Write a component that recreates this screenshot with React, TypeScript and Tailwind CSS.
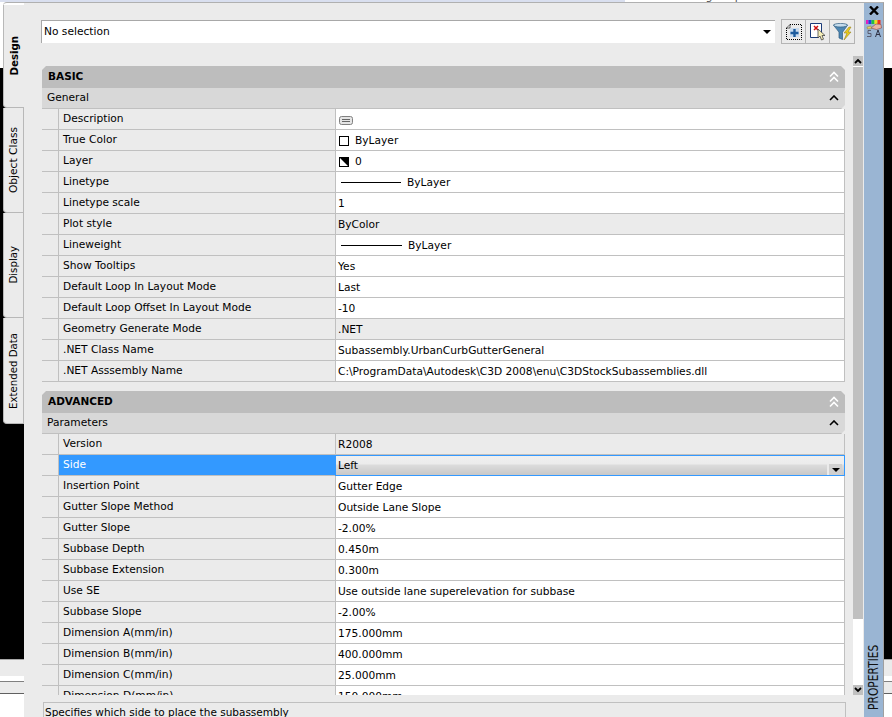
import React from "react";

const font = { fontFamily: '"DejaVu Sans", Tahoma, sans-serif' };

type Row = { l: string; v: React.ReactNode; grey?: boolean; sel?: boolean };

const Line = ({ w = 60 }: { w?: number }) => <span className="inline-block h-px bg-black mr-[6px]" style={{ width: w }} />;

const basic: Row[] = [
  { l: "Description", v: (
    <svg width="14" height="9" viewBox="0 0 14 9" className="block ml-[1px]">
      <rect x="0.5" y="0.5" width="13" height="8" rx="2" fill="#e4e4e4" stroke="#808080" />
      <path d="M3 3.5h8M3 5.5h8" stroke="#666" />
    </svg>
  ) },
  { l: "True Color", v: <span className="flex items-center"><span className="w-[10px] h-[10px] border border-black bg-white ml-[1px] mr-[6px]" />ByLayer</span> },
  { l: "Layer", v: (
    <span className="flex items-center">
      <svg width="10" height="10" viewBox="0 0 10 10" className="ml-[1px] mr-[6px]"><rect x="0.5" y="0.5" width="9" height="9" fill="#fff" stroke="#000" /><path d="M0 0h10v10z" fill="#000" /></svg>0
    </span>
  ) },
  { l: "Linetype", v: <span className="flex items-center pl-[3px]"><Line />ByLayer</span> },
  { l: "Linetype scale", v: "1" },
  { l: "Plot style", v: "ByColor", grey: true },
  { l: "Lineweight", v: <span className="flex items-center pl-[3px]"><Line w={61} />ByLayer</span> },
  { l: "Show Tooltips", v: "Yes" },
  { l: "Default Loop In Layout Mode", v: "Last" },
  { l: "Default Loop Offset In Layout Mode", v: "-10" },
  { l: "Geometry Generate Mode", v: ".NET", grey: true },
  { l: ".NET Class Name", v: "Subassembly.UrbanCurbGutterGeneral" },
  { l: ".NET Asssembly Name", v: "C:\\ProgramData\\Autodesk\\C3D 2008\\enu\\C3DStockSubassemblies.dll" },
];

const advanced: Row[] = [
  { l: "Version", v: "R2008", grey: true },
  { l: "Side", v: "Left", sel: true },
  { l: "Insertion Point", v: "Gutter Edge" },
  { l: "Gutter Slope Method", v: "Outside Lane Slope" },
  { l: "Gutter Slope", v: "-2.00%" },
  { l: "Subbase Depth", v: "0.450m" },
  { l: "Subbase Extension", v: "0.300m" },
  { l: "Use SE", v: "Use outside lane superelevation for subbase" },
  { l: "Subbase Slope", v: "-2.00%" },
  { l: "Dimension A(mm/in)", v: "175.000mm" },
  { l: "Dimension B(mm/in)", v: "400.000mm" },
  { l: "Dimension C(mm/in)", v: "25.000mm" },
  { l: "Dimension D(mm/in)", v: "150.000mm" },
];

const Arrow = () => (
  <svg width="8" height="4" viewBox="0 0 8 4" className="block"><path d="M0 0h8L4 4z" fill="#000" /></svg>
);

const PropRow = ({ r }: { r: Row }) => (
  <div className="flex h-[21px] border-b border-[#c0c0c0]">
    <div className="w-[16px] shrink-0 bg-[#ebebeb]" />
    <div className={`w-[277px] shrink-0 border-l border-[#c0c0c0] pl-[4px] leading-[20px] ${r.sel ? "bg-[#3399ff] text-white" : "bg-[#ebebeb] text-black"}`}>{r.l}</div>
    {r.sel ? (
      <div className="relative flex-1 h-[21px] -mb-px border border-[#3399ff] pl-[2px] leading-[19px] bg-[linear-gradient(#f0f0f0_0,#ececec_8px,#dcdcdc_9px,#c8c8c8_100%)]">
        {r.v}
        <div className="absolute right-[2px] top-[8px] w-[15px] h-[11px] bg-[#d0d0d0] border-l-2 border-[#ebebeb] flex items-center justify-center"><Arrow /></div>
      </div>
    ) : (
      <div className={`flex-1 border-l border-r border-[#c0c0c0] pl-[2px] pt-[2px] flex items-center ${r.grey ? "bg-[#ebebeb]" : "bg-white"}`}>{r.v}</div>
    )}
  </div>
);

const Section = ({ title, sub, rows }: { title: string; sub: string; rows: Row[] }) => (
  <div>
    <div className="h-[22px] bg-[#bdbdbd] flex items-center justify-between pl-[6px] pr-[6px] [clip-path:polygon(4px_0,calc(100%-4px)_0,100%_4px,100%_100%,0_100%,0_4px)]">
      <span className="font-bold text-black text-[10.5px]">{title}</span>
      <svg width="10" height="12" viewBox="0 0 10 12" fill="none" stroke="#fff" strokeWidth="1.6"><path d="M1 5.5 5 1.5l4 4M1 10.5l4-4 4 4" /></svg>
    </div>
    <div className="h-[21px] bg-[#d8d8d8] border-b border-[#c0c0c0] flex items-center justify-between pl-[5px] pr-[6px] [clip-path:polygon(0_0,100%_0,100%_calc(100%-4px),calc(100%-4px)_100%,0_100%)]">
      <span>{sub}</span>
      <svg width="10" height="6" viewBox="0 0 10 6" fill="none" stroke="#000" strokeWidth="1.6"><path d="M1 5 5 1l4 4" /></svg>
    </div>
    {rows.map((r) => <PropRow key={r.l} r={r} />)}
  </div>
);

const tabs = [
  { t: "Design", h: "h-[103px]", active: true },
  { t: "Object Class", h: "h-[105px]" },
  { t: "Display", h: "h-[105px]" },
  { t: "Extended Data", h: "h-[106px]" },
];

export default function App() {
  return (
    <div className="relative w-[892px] h-[717px] overflow-hidden bg-white text-[10.65px] text-black" style={font}>
      {/* desktop behind the palette */}
      <div className="flex flex-col h-full">
        <div className="h-[2px] flex">
          <div className="w-[625px] bg-[#d9dfef]" />
          <div className="flex-1 bg-white overflow-hidden pl-[7px]">
            <div className="-mt-[9px] text-[11px] leading-[12px] text-[#555] whitespace-nowrap">Find a drawing for plan</div>
          </div>
        </div>
        <div className="h-[66px] bg-white" />
        <div className="h-[591px] bg-black" />
        <div className="h-[22px] bg-[#ebebeb] border-t border-[#a8a8a8] border-b-[5px] border-b-white" />
        <div className="h-[12px] bg-[#ebebeb] border-t border-[#808080]" />
        <div className="h-px bg-[#606060]" />
        <div className="flex-1 bg-white" />
      </div>

      {/* palette window */}
      <div className="absolute left-[3px] top-[2px] w-[881px] h-[715px] flex">
        <div className="w-[21px] shrink-0 flex flex-col border-t border-[#b0b0b0] rounded-tl-[4px] pt-[2px]">
          {tabs.map((t) => (
            <div
              key={t.t}
              className={`${t.h} w-[21px] pl-[1px] flex items-center justify-center border-l border-b border-[#b8b8b8] rounded-bl-[4px] bg-[#ebebeb] ${t.active ? "font-bold text-[10.2px]" : "border-r"} ${t.t === "Extended Data" || t.t === "Display" ? "text-[10.2px]" : ""}`}
            >
              <span className="[writing-mode:vertical-rl] rotate-180 whitespace-nowrap">{t.t}</span>
            </div>
          ))}
        </div>

        <div className="w-[840px] shrink-0 flex flex-col bg-[#ebebeb] border-t border-[#b0b0b0]">
          <div className="h-[53px] shrink-0 flex pt-[16px] pl-[17px]">
            <div className="w-[734px] h-[23px] mt-[1px] bg-white border-t border-l border-[#a8a8a8] flex items-center justify-between pl-[2px] pr-[4px]">
              <span>No selection</span>
              <Arrow />
            </div>
            <div className="ml-[6px] h-[25px] flex border border-[#b4b4b4]">
              <div className="w-[24px] flex items-center justify-center border-r border-[#b4b4b4]">
                <svg width="16" height="16" viewBox="0 0 16 16">
                  <path d="M4 .5h11.5v15H.5V4" fill="none" stroke="#000" strokeDasharray="1 1" />
                  <path d="M4 .5 .5 4h3.500z" fill="#fff" stroke="#000" strokeWidth=".6" />
                  <rect x="4" y="4" width="9" height="9" fill="#c9dbee" />
                  <path d="M8.500 5v8M4.500 9h8" stroke="#1d5c9e" strokeWidth="2.400" />
                </svg>
              </div>
              <div className="w-[24px] flex items-center justify-center border-r border-[#b4b4b4]">
                <svg width="16" height="18" viewBox="0 0 16 18">
                  <path d="M11.500 12V.5H.5v14h8" fill="#fff" stroke="#1a3a78" />
                  <path d="M4 3l4 4M8 3 4 7" stroke="#d01010" strokeWidth="1.500" />
                  <path d="M8 6v9l2-2 1.500 4 2-.8-1.500-3.700h3z" fill="#f6efb8" stroke="#444" strokeWidth=".8" />
                </svg>
              </div>
              <div className="w-[24px] flex items-center justify-center">
                <svg width="19" height="17" viewBox="0 0 19 17">
                  <path d="M.5 2c2 3 5 6 5.500 7.500V15l3.500 1.500V9.500C10 8 13 5 14.500 2z" fill="#4d86b2" stroke="#2c5a80" strokeWidth=".7" />
                  <ellipse cx="7.500" cy="2.200" rx="7" ry="1.800" fill="#c5dcec" stroke="#2c5a80" strokeWidth=".7" />
                  <path d="M16 4l-5 6h3l-3 7 7-8h-3l3-5z" fill="#e9cc1e" stroke="#8a7410" strokeWidth=".5" />
                </svg>
              </div>
            </div>
          </div>

          <div className="h-[639px] shrink-0 flex">
            <div className="w-[803px] ml-[18px] shrink-0 pt-[10px] overflow-hidden">
              <div className="flex flex-col gap-[9px]">
                <Section title="BASIC" sub="General" rows={basic} />
                <Section title="ADVANCED" sub="Parameters" rows={advanced} />
              </div>
            </div>
            <div className="ml-[8px] w-[10px] shrink-0 flex flex-col bg-white">
              <div className="h-[10px] bg-[#c0c0c0] flex items-center justify-center">
                <svg width="8" height="6" viewBox="0 0 8 6" fill="none" stroke="#000" strokeWidth="1.8"><path d="M1 5l3-3 3 3" /></svg>
              </div>
              <div className="h-[552px] mt-px bg-[#c0c0c0]" />
              <div className="flex-1" />
              <div className="h-[10px] bg-[#c0c0c0] flex items-center justify-center">
                <svg width="8" height="6" viewBox="0 0 8 6" fill="none" stroke="#000" strokeWidth="1.8"><path d="M1 1l3 3 3-3" /></svg>
              </div>
            </div>
          </div>

          <div className="ml-[19px] mt-[7px] w-[803px] flex-1 border-t border-l border-r border-[#c0c0c0] pl-[1px] overflow-hidden text-[10.5px] leading-[19px] whitespace-nowrap">
            Specifies which side to place the subassembly
          </div>
        </div>

        <div className="w-[20px] shrink-0 bg-[#9ab5d3] border-t border-[#b0b0b0] border-r border-r-[#a0a0a0] flex flex-col items-center justify-between">
          <div className="flex flex-col items-center pt-[3px]">
            <svg width="10" height="9" viewBox="0 0 10 9" stroke="#000" strokeWidth="2.400"><path d="M1 .5l8 8M9 .5 1 8.500" /></svg>
            <svg width="16" height="17" viewBox="0 0 16 17" className="mt-[5px]">
              <rect x="0" y="0" width="2.500" height="4" fill="#e020c0" />
              <rect x="2.500" y="0" width="3" height="4" fill="#2040e0" />
              <rect x="5.500" y="0" width="3" height="4" fill="#20c040" />
              <rect x="8.500" y="0" width="3" height="4" fill="#f0e020" />
              <rect x="11.500" y="0" width="3" height="4" fill="#f03020" />
              <path d="M5 8l5-4 5 .5.500 3.500-5 1.500z" fill="#eab4a4" stroke="#803030" strokeWidth=".5" />
              <path d="M1 7l4-1 .500 2.500-4 .5z" fill="#e6d268" stroke="#807020" strokeWidth=".4" />
              <path d="M5 10.500H2v3h3v3H1" fill="none" stroke="#556" strokeWidth=".9" />
              <path d="M9.500 17l2.500-7 2.500 7M10.500 14.500h3" fill="none" stroke="#223" strokeWidth=".9" />
            </svg>
          </div>
          <span className="[writing-mode:vertical-rl] [transform:rotate(180deg)_scale(1,0.79)] -mb-[2px] whitespace-nowrap text-[13.5px] text-[#111]">PROPERTIES</span>
        </div>
      </div>
    </div>
  );
}
